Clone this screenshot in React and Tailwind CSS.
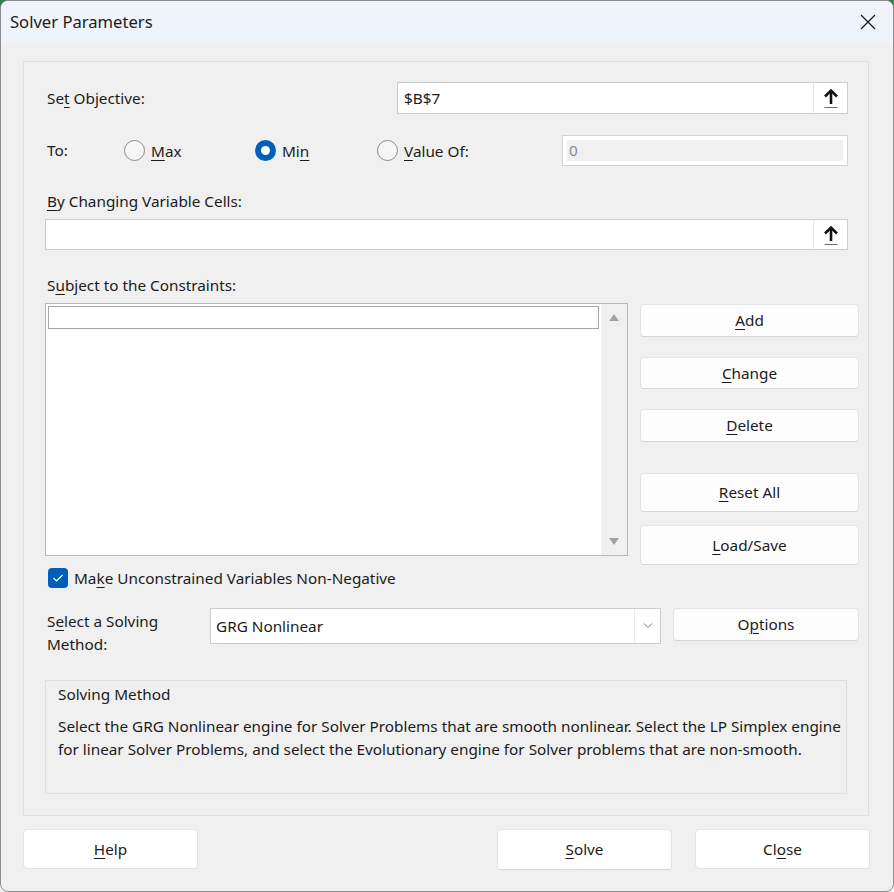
import React from "react";

const font = "font-['Noto_Sans','Open_Sans',sans-serif]";

const Key = ({ children }) => (
  <span className="underline underline-offset-[3px] decoration-1">{children}</span>
);

const PickButton = () => (
  <div className="flex h-full w-[34px] items-center justify-center border-l border-[#e6e6e6] bg-white">
    <svg width="18" height="22" viewBox="0 0 18 22">
      <path d="M9 3.5 L9 17" stroke="#111" strokeWidth="2.6" />
      <path d="M3 9.5 L9 3.5 L15 9.5" stroke="#111" strokeWidth="2.6" fill="none" />
      <path d="M2.5 20.5 L15.5 20.5" stroke="#6a6a6a" strokeWidth="1" />
    </svg>
  </div>
);

const Radio = ({ checked, children, className }) => (
  <div className={"flex items-center " + className}>
    {checked ? (
      <span className="flex h-[21px] w-[21px] items-center justify-center rounded-full bg-[#005fb8]">
        <span className="h-[9px] w-[9px] rounded-full bg-white" />
      </span>
    ) : (
      <span className="h-[21px] w-[21px] rounded-full border border-[#8a8a8a] bg-[#f6f6f6]" />
    )}
    <span className="ml-[6px] mt-[2px]">{children}</span>
  </div>
);

const Btn = ({ children, className = "" }) => (
  <div
    className={
      "flex items-center justify-center rounded-[4px] border border-[#e3e3e3] border-b-[#d6d6d6] bg-[#fdfdfd] " +
      className
    }
  >
    {children}
  </div>
);

export default function App() {
  return (
    <div
      className={
        "h-[892px] w-[894px] bg-[linear-gradient(to_bottom,#3d7a56_0,#3d7a56_14px,#f3f3f3_14px)] text-[15.3px] text-[#1b1b1b] " +
        font
      }
    >
      <div className="flex h-full flex-col overflow-hidden rounded-[8px] border border-[#8e8e8e] bg-[#f0f0f0]">
        {/* title bar */}
        <div className="flex h-[42px] items-center justify-between bg-[#eef4f9] pl-[9px] pr-[17px]">
          <span className="text-[16.6px]">Solver Parameters</span>
          <svg width="16" height="16" viewBox="0 0 16 16">
            <path d="M1 1 L15 15 M15 1 L1 15" stroke="#1b1b1b" strokeWidth="1.3" />
          </svg>
        </div>

        {/* main group */}
        <div className="ml-[22px] mt-[18px] h-[755px] w-[846px] border border-[#e0e0e0] pl-[21px] pt-[20px]">
          <div className="flex h-[32px] items-center">
            <span className="w-[352px] pl-[2px]">
              Se<Key>t</Key> Objective:
            </span>
            <div className="flex h-[32px] w-[451px] items-center border border-[#cdcdcd] bg-white">
              <span className="flex-1 pl-[6px]">$B$7</span>
              <PickButton />
            </div>
          </div>

          <div className="mt-[21px] flex h-[31px] items-center">
            <span className="w-[79px] pl-[2px]">To:</span>
            <Radio className="w-[131px]">
              <Key>M</Key>ax
            </Radio>
            <Radio checked className="w-[122px]">
              Mi<Key>n</Key>
            </Radio>
            <Radio className="w-[185px]">
              <Key>V</Key>alue Of:
            </Radio>
            <div className="h-[31px] w-[286px] border border-[#d3d3d3] bg-white p-[4px]">
              <div className="flex h-full items-center bg-[#f0f0f0] pl-[2px] text-[#8a8a8a]">0</div>
            </div>
          </div>

          <div className="mt-[25px] h-[20px] pl-[2px] leading-[20px]">
            <Key>B</Key>y Changing Variable Cells:
          </div>
          <div className="mt-[8px] flex h-[31px] w-[803px] items-center border border-[#cdcdcd] bg-white">
            <span className="flex-1" />
            <PickButton />
          </div>

          <div className="mt-[25px] h-[20px] pl-[2px] leading-[20px]">
            S<Key>u</Key>bject to the Constraints:
          </div>

          <div className="mt-[8px] flex items-start">
            <div className="w-[583px]">
              <div className="flex h-[253px] border border-[#b8b8b8] bg-white">
                <div className="flex-1 p-[2px]">
                  <div className="h-[23px] border border-[#a6a6a6]" />
                </div>
                <div className="flex w-[26px] flex-col items-center justify-between bg-[#f0f0f0] py-[10px]">
                  <svg width="10" height="7" viewBox="0 0 10 7">
                    <path d="M5 0 L10 7 L0 7 Z" fill="#a3a3a3" />
                  </svg>
                  <svg width="10" height="7" viewBox="0 0 10 7">
                    <path d="M0 0 L10 0 L5 7 Z" fill="#a3a3a3" />
                  </svg>
                </div>
              </div>
              <div className="mt-[12px] flex h-[20px] items-center pl-[3px]">
                <span className="flex h-[20px] w-[20px] items-center justify-center rounded-[4px] bg-[#005fb8]">
                  <svg width="12" height="10" viewBox="0 0 12 10">
                    <path d="M1.5 5 L4.5 8 L10.5 2" stroke="#fff" strokeWidth="1.2" fill="none" />
                  </svg>
                </span>
                <span className="ml-[6px]">
                  Ma<Key>k</Key>e Unconstrained Variables Non-Negative
                </span>
              </div>
            </div>

            <div className="ml-[12px] flex w-[219px] flex-col">
              <Btn className="mt-[1px] h-[33px]">
                <Key>A</Key>dd
              </Btn>
              <Btn className="mt-[20px] h-[32px]">
                <Key>C</Key>hange
              </Btn>
              <Btn className="mt-[20px] h-[33px]">
                <Key>D</Key>elete
              </Btn>
              <Btn className="mt-[31px] h-[39px]">
                <Key>R</Key>eset All
              </Btn>
              <Btn className="mt-[13px] h-[40px]">
                <Key>L</Key>oad/Save
              </Btn>
            </div>
          </div>

          <div className="mt-[20px] flex items-start">
            <div className="mt-[2px] w-[165px] pl-[2px] leading-[23px]">
              S<Key>e</Key>lect a Solving
              <br />
              Method:
            </div>
            <div className="flex h-[36px] w-[451px] items-center border border-[#cdcdcd] bg-white">
              <span className="flex-1 pl-[5px]">GRG Nonlinear</span>
              <div className="flex h-full w-[26px] items-center justify-center border-l border-[#ececec]">
                <svg width="10" height="6" viewBox="0 0 10 6">
                  <path d="M1 0.5 L5 4.5 L9 0.5" stroke="#777" strokeWidth="1" fill="none" />
                </svg>
              </div>
            </div>
            <Btn className="ml-[12px] h-[33px] w-[186px]">
              O<Key>p</Key>tions
            </Btn>
          </div>

          <div className="mt-[24px] h-[114px] w-[802px] border border-[#e0e0e0] pl-[12px] pt-[2px] leading-[23px]">
            <div>Solving Method</div>
            <p className="mt-[9px]">
              Select the GRG Nonlinear engine for Solver Problems that are smooth nonlinear. Select the LP Simplex engine
              for linear Solver Problems, and select the Evolutionary engine for Solver problems that are non-smooth.
            </p>
          </div>
        </div>

        {/* dialog buttons */}
        <div className="ml-[22px] mr-[23px] mt-[13px] flex">
          <Btn className="h-[40px] w-[175px] border-b-[#e3e3e3] bg-white">
            <Key>H</Key>elp
          </Btn>
          <span className="flex-1" />
          <Btn className="h-[41px] w-[175px] border-[#86b8e8] border-b-[#86b8e8] bg-white">
            <Key>S</Key>olve
          </Btn>
          <Btn className="ml-[23px] h-[40px] w-[175px] border-b-[#e3e3e3] bg-white">
            Cl<Key>o</Key>se
          </Btn>
        </div>
      </div>
    </div>
  );
}
